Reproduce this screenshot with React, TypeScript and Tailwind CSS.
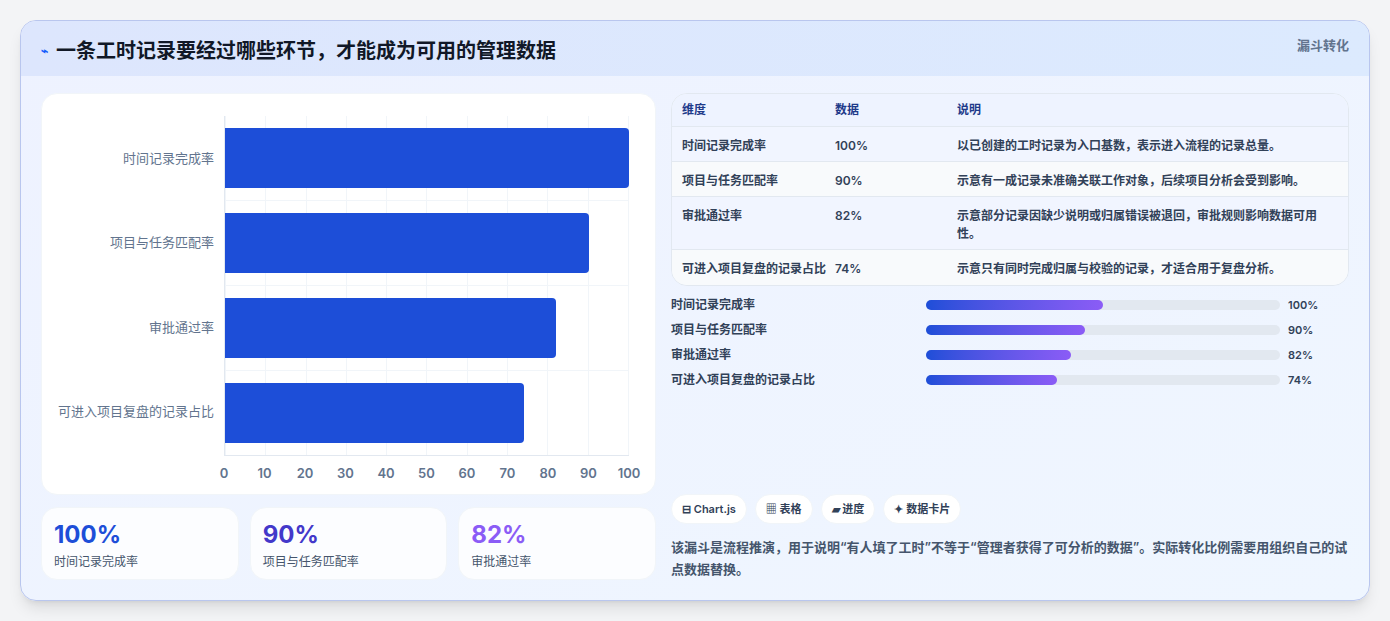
import React from 'react'

type Row = { name: string; value: number; note: string }

const rows: Row[] = [
  { name: '时间记录完成率', value: 100, note: '以已创建的工时记录为入口基数，表示进入流程的记录总量。' },
  { name: '项目与任务匹配率', value: 90, note: '示意有一成记录未准确关联工作对象，后续项目分析会受到影响。' },
  { name: '审批通过率', value: 82, note: '示意部分记录因缺少说明或归属错误被退回，审批规则影响数据可用性。' },
  { name: '可进入项目复盘的记录占比', value: 74, note: '示意只有同时完成归属与校验的记录，才适合用于复盘分析。' },
]

const ticks = [0, 10, 20, 30, 40, 50, 60, 70, 80, 90, 100]

function Chart() {
  return (
    <div className="flex h-[402px] rounded-2xl border border-slate-100 bg-white pt-[22px] pl-3 pr-[26px]">
      <div className="flex w-[170px] flex-col pb-[40px]">
        {rows.map((r) => (
          <div key={r.name} className="flex flex-1 items-center justify-end pr-[10px] text-[13px] text-slate-500">
            {r.name}
          </div>
        ))}
      </div>
      <div className="flex flex-1 flex-col">
        <div className="relative flex h-[340px] flex-col border-l border-b border-slate-200">
          <div className="absolute inset-0 flex justify-between">
            {ticks.map((t) => (
              <div key={t} className="h-full w-px bg-slate-100" />
            ))}
          </div>
          {rows.map((r, i) => (
            <div key={r.name} className={`relative flex flex-1 items-center ${i < 3 ? 'border-b border-slate-100' : ''}`}>
              <div className="h-[60px] rounded-r-sm bg-[#1d4ed8]" style={{ width: `${r.value}%` }} />
            </div>
          ))}
        </div>
        <div className="relative mt-[8px] h-4">
          {ticks.map((t) => (
            <span
              key={t}
              className="absolute -translate-x-1/2 text-[13px] font-semibold text-slate-500"
              style={{ left: `${t}%` }}
            >
              {t}
            </span>
          ))}
        </div>
      </div>
    </div>
  )
}

export default function App() {
  return (
    <div className="min-h-[621px] bg-[#f3f4f6] pt-5 pb-5 px-5" style={{ fontFamily: 'Inter, "Noto Sans CJK SC", sans-serif' }}>
      <div className="overflow-hidden rounded-2xl border border-[#b9c6ee] bg-gradient-to-br from-[#eef2ff] to-[#eff6ff] shadow-lg">
        <div className="flex h-[55px] items-start justify-between bg-gradient-to-r from-[#dde6fd] to-[#dceafe] pl-5 pr-5">
          <h1 className="mt-[15px] flex items-center gap-2 text-[20px] font-bold text-[#111827]">
            <span className="text-[12px] text-blue-600">⌁</span>
            一条工时记录要经过哪些环节，才能成为可用的管理数据
          </h1>
          <span className="mt-[15px] text-[13px] font-semibold text-slate-500">漏斗转化</span>
        </div>
        <div className="flex gap-[15px] px-5 pt-[17px] pb-5">
          <div className="flex w-[615px] flex-col gap-[12px]">
            <Chart />
            <div className="grid grid-cols-3 gap-[11px]">
              {rows.slice(0, 3).map((r, i) => (
                <div key={r.name} className="h-[73px] rounded-2xl border border-slate-100 bg-white/80 px-3 pt-[13px]">
                  <div className={`text-[24px] font-bold leading-7 ${['text-[#1d4ed8]', 'text-[#4338ca]', 'text-[#8b5cf6]'][i]}`}>
                    {r.value}%
                  </div>
                  <div className="mt-1 text-[12px] text-slate-600">{r.name}</div>
                </div>
              ))}
            </div>
          </div>
          <div className="flex flex-1 flex-col">
            <div className="overflow-hidden rounded-2xl border border-slate-200 bg-white/60 text-[12px]">
              <div className="flex h-[33px] items-center border-b border-slate-200 bg-[#eef3ff] font-semibold text-[#1e3a8a]">
                <div className="w-[163px] pl-[10px]">维度</div>
                <div className="w-[122px]">数据</div>
                <div className="flex-1">说明</div>
              </div>
              {rows.map((r, i) => (
                <div
                  key={r.name}
                  className={`flex items-start font-semibold text-slate-700 ${i === 2 ? 'h-[53px]' : 'h-[35px]'} ${i % 2 ? 'bg-[#f8fafc]' : 'bg-[#f1f5ff]'} ${i < 3 ? 'border-b border-slate-200' : ''}`}
                >
                  <div className="w-[163px] pl-[10px] pt-[10px]">{r.name}</div>
                  <div className="w-[122px] pt-[10px]">{r.value}%</div>
                  <div className="flex-1 pr-5 pt-[10px] leading-[18px]">{r.note}</div>
                </div>
              ))}
            </div>
            <div className="mt-[11px] flex flex-col gap-[9px] text-[12px] font-semibold text-slate-700">
              {rows.map((r) => (
                <div key={r.name} className="flex h-[16px] items-center">
                  <div className="w-[255px]">{r.name}</div>
                  <div className="h-[10px] w-[354px] rounded-full bg-[#e2e8f0]">
                    <div
                      className="h-full rounded-full bg-gradient-to-r from-[#1d4ed8] to-[#8b5cf6]"
                      style={{ width: `${r.value / 2}%` }}
                    />
                  </div>
                  <div className="ml-2 text-[11px]">{r.value}%</div>
                </div>
              ))}
            </div>
            <div className="mt-auto flex gap-2 text-[11px] font-semibold text-slate-700">
              {['⊟ Chart.js', '▦ 表格', '▰ 进度', '✦ 数据卡片'].map((p) => (
                <span key={p} className="rounded-full border border-slate-100 bg-white px-[10px] py-[6px]">
                  {p}
                </span>
              ))}
            </div>
            <p className="mt-[12px] text-[13px] font-semibold leading-[22px] text-slate-600">
              该漏斗是流程推演，用于说明“有人填了工时”不等于“管理者获得了可分析的数据”。实际转化比例需要用组织自己的试点数据替换。
            </p>
          </div>
        </div>
      </div>
    </div>
  )
}
